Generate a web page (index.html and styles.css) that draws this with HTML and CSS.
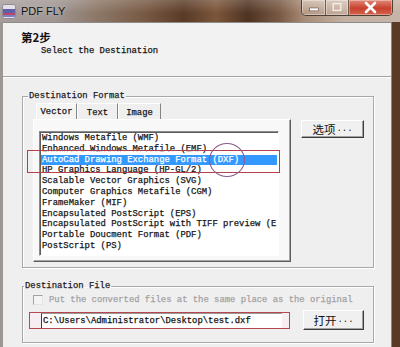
FILE: index.html
```html
<!DOCTYPE html>
<html lang="en">
<head>
    <meta charset="UTF-8">
    <meta name="viewport" content="width=device-width, initial-scale=1.0">
    <title>PDF FLY</title>
    <link rel="stylesheet" href="styles.css">
</head>
<body>
  <div class="window">

    <div class="titlebar">
      <svg class="app-icon" viewBox="0 0 14 15">
        <rect x="0.5" y="0.5" width="13" height="14" rx="2" fill="#e4e2e6" stroke="#8d8a92"/>
        <rect x="1" y="5" width="12" height="4" fill="#5d5fa8"/>
        <rect x="1" y="9" width="12" height="2" fill="#b8456a"/>
        <rect x="1" y="11" width="12" height="2" fill="#7c7fc0"/>
      </svg>
      <span class="title">PDF FLY</span>
      <div class="caption-btns">
        <span class="cap cap-min">
          <svg viewBox="0 0 24 15"><rect x="8" y="8" width="9" height="3" fill="#fff" stroke="#5a4a40" stroke-width="0.6"/></svg>
        </span>
        <span class="cap cap-max">
          <svg viewBox="0 0 23 15"><rect x="7.5" y="3.5" width="8" height="7" fill="none" stroke="#f4eee8" stroke-width="1.4"/></svg>
        </span>
        <span class="cap cap-close">
          <svg viewBox="0 0 43 15"><path d="M17 3 L26 12 M26 3 L17 12" stroke="#fff" stroke-width="2.6" stroke-linecap="round"/></svg>
        </span>
      </div>
    </div>

    <div class="frame">
      <div class="client">

        <div class="header">
          <div class="step">第2步</div>
          <div class="subtitle">Select the Destination</div>
        </div>

        <div class="content">

          <fieldset class="group format-group">
            <legend>Destination Format</legend>
            <div class="format-row">
              <div class="tabs-col">
                <div class="tabs">
                  <span class="tab tab-active">Vector</span>
                  <span class="tab">Text</span>
                  <span class="tab tab-wide">Image</span>
                </div>
                <div class="tab-panel">
                  <ul class="listbox">
                    <li>Windows Metafile (WMF)</li>
                    <li>Enhanced Windows Metafile (EMF)</li>
                    <li class="sel">AutoCad Drawing Exchange Format (DXF)</li>
                    <li>HP Graphics Language (HP-GL/2)</li>
                    <li>Scalable Vector Graphics (SVG)</li>
                    <li>Computer Graphics Metafile (CGM)</li>
                    <li>FrameMaker (MIF)</li>
                    <li>Encapsulated PostScript (EPS)</li>
                    <li>Encapsulated PostScript with TIFF preview (E</li>
                    <li>Portable Doucment Format (PDF)</li>
                    <li>PostScript (PS)</li>
                  </ul>
                </div>
              </div>
              <button class="btn btn-options">选项<span class="dots">...</span></button>
            </div>
          </fieldset>

          <fieldset class="group file-group">
            <legend>Destination File</legend>
            <div class="check-row">
              <span class="checkbox"></span>
              <span class="check-label">Put the converted files at the same place as the original</span>
            </div>
            <div class="path-row">
              <div class="path-box">
                <input class="path-input" type="text" value="C:\Users\Administrator\Desktop\test.dxf">
              </div>
              <button class="btn btn-open">打开<span class="dots">...</span></button>
            </div>
          </fieldset>

          <div class="mark-rect"></div>
          <div class="mark-circle"></div>
        </div>

      </div>
    </div>

  </div>
</body>
</html>
```

FILE: styles.css
```css
*{
    margin: 0;
    padding: 0;
    box-sizing: border-box;
}
body{
    width: 400px;
    height: 347px;
    overflow: hidden;
    background-color: #6b4a34;
    font-family: "Liberation Mono", monospace;
    font-size: 8.9px;
    color: #161616;
    -webkit-text-stroke: 0.25px currentColor;
}
.window{
    display: flex;
    flex-direction: column;
    height: 347px;
}

/* title bar */
.titlebar{
    height: 22px;
    display: flex;
    align-items: center;
    -webkit-text-stroke: 0;
    background:
        linear-gradient(180deg, rgba(255,255,255,0.18), rgba(255,255,255,0) 60%),
        linear-gradient(90deg, #a89f9d 0%, #9f9592 14%, #8c7868 24%, #785a44 36%, #5a3b27 46%, #7b563a 54%, #4e3322 62%, #7a5a44 70%, #a88c76 76%, #c3b0a2 86%, #c6b4a6 100%);
}
.app-icon{
    width: 14px;
    height: 15px;
    margin-left: 2px;
}
.title{
    margin-left: 5px;
    font-family: "Liberation Sans", sans-serif;
    font-size: 11px;
    color: #141414;
    text-shadow: 0 0 4px rgba(255,255,255,0.5);
}
.caption-btns{
    margin-left: auto;
    margin-right: 7px;
    align-self: flex-start;
    display: flex;
    height: 16px;
    border: 1px solid #4f3f35;
    border-top: none;
    border-radius: 0 0 5px 5px;
    overflow: hidden;
}
.cap{
    height: 15px;
    display: block;
    background: linear-gradient(180deg, rgba(235,220,205,0.55), rgba(190,160,140,0.45));
    box-shadow: inset 0 0 0 1px rgba(255,255,255,0.35);
}
.cap svg{
    display: block;
    width: 100%;
    height: 100%;
}
.cap-min{
    width: 24px;
    border-right: 1px solid #6e5a4e;
}
.cap-max{
    width: 23px;
    border-right: 1px solid #6e5a4e;
}
.cap-close{
    width: 43px;
    background: linear-gradient(180deg, #e08a78, #c8402e 55%, #d2654c);
}

/* window frame */
.frame{
    flex: 1;
    display: flex;
    border-left: 3px solid #9c9694;
    border-right: 8px solid #5a3a27;
}
.client{
    flex: 1;
    display: flex;
    flex-direction: column;
    background-color: #f0eff0;
    border-top: 1px solid #8e8b8b;
    border-right: 1px solid #8a8686;
}

/* step header */
.header{
    height: 54px;
    padding: 7px 0 0 18px;
    background-color: #f3f2f3;
    border-bottom: 1px solid #a3a1a1;
}
.step{
    font-family: "Noto Sans CJK SC", sans-serif;
    font-weight: bold;
    font-size: 11.5px;
    line-height: 14px;
    color: #111;
    -webkit-text-stroke: 0;
}
.subtitle{
    margin: 2px 0 0 20px;
    line-height: 11px;
}

.content{
    position: relative;
    flex: 1;
    padding: 13px 0 0 19px;
    border-top: 1px solid #fff;
}

/* group boxes */
.group{
    width: 352px;
    min-width: 0;
    border: 1px solid #a9a7a8;
    box-shadow: inset 1px 1px 0 #fff, 1px 1px 0 #fff;
}
.group legend{
    margin-left: -5px;
    padding: 0 1px;
    line-height: 10px;
    color: #1c1c1c;
}
.format-group{
    padding: 2px 0 5px 10px;
}
.format-row{
    display: flex;
    align-items: flex-start;
}
.tabs-col{
    width: 258px;
}
.tabs{
    display: flex;
    height: 16px;
    padding-left: 3px;
}
.tab{
    width: 41px;
    height: 16px;
    line-height: 16px;
    text-align: center;
    border-top: 1px solid #fff;
    border-left: 1px solid #fff;
    border-right: 1px solid #858585;
    padding-top: 1px;
}
.tab-wide{
    width: 43px;
}
.tab-active{
    padding-top: 0;
    background-color: #f5f4f5;
}
.tab-panel{
    height: 143px;
    padding: 11px 0 0 5px;
    background-color: #f8f8f9;
    border: 1px solid;
    border-color: #fff #5c5c5c #5c5c5c #fff;
    box-shadow: inset -1px -1px 0 #a6a6a6;
}
.listbox{
    width: 240px;
    height: 125px;
    list-style: none;
    overflow: hidden;
    padding: 1px 1px 0;
    background-color: #fff;
    border: 1px solid;
    border-color: #8a8a8a #fff #fff #8a8a8a;
    box-shadow: inset 1px 1px 0 #5c5c5c;
}
.listbox li{
    height: 10.8px;
    line-height: 10.8px;
    padding-left: 1px;
    white-space: nowrap;
    overflow: hidden;
}
.listbox .sel{
    background-color: #3399ff;
    color: #fff;
}

/* buttons */
.btn{
    font-family: "Noto Sans CJK SC", sans-serif;
    font-size: 11.5px;
    color: #111;
    -webkit-text-stroke: 0;
    background-color: #f0f0f0;
    border: 1px solid;
    border-color: #fff #3c3c3c #3c3c3c #fff;
    box-shadow: inset -1px -1px 0 #a0a0a0;
    display: flex;
    align-items: center;
    justify-content: center;
}
.btn .dots{
    font-family: "Liberation Mono", monospace;
    font-size: 8.9px;
    margin-left: 1px;
}
.btn-options{
    width: 63px;
    height: 18px;
    margin: 17px 0 0 10px;
}
.btn-open{
    width: 61px;
    height: 20px;
    margin-left: 13px;
}

/* destination file */
.file-group{
    margin-top: 13px;
    padding: 3px 0 12px 6px;
}
.check-row{
    display: flex;
    align-items: center;
    gap: 6px;
    height: 11px;
    margin-left: 4px;
}
.checkbox{
    width: 10px;
    height: 10px;
    background-color: #f4f4f4;
    border: 1px solid;
    border-color: #a2a2a2 #e4e4e4 #e4e4e4 #a2a2a2;
}
.check-label{
    color: #a3a3a3;
    white-space: nowrap;
}
.path-row{
    display: flex;
    align-items: center;
    margin-top: 5px;
}
.path-box{
    width: 261px;
    height: 17px;
    display: flex;
    padding: 0 7px 0 11px;
    background-color: #f6eef0;
    border: 1px solid #b5474f;
}
.path-input{
    flex: 1;
    width: 100%;
    height: 15px;
    font-family: "Liberation Mono", monospace;
    font-size: 8.9px;
    color: #111;
    -webkit-text-stroke: 0.25px #111;
    background-color: #fff;
    border: none;
    border-left: 1px solid #3c3c3c;
    border-top: 1px solid #9a9a9a;
    padding-left: 1px;
    outline: none;
}

/* hand-drawn marks over the screenshot */
.mark-rect{
    position: absolute;
    left: 24px;
    top: 72px;
    width: 253px;
    height: 23px;
    border: 1.5px solid #b3404a;
}
.mark-circle{
    position: absolute;
    left: 206px;
    top: 65px;
    width: 36px;
    height: 34px;
    border: 1px solid #8c5a86;
    border-radius: 50%;
}
```
